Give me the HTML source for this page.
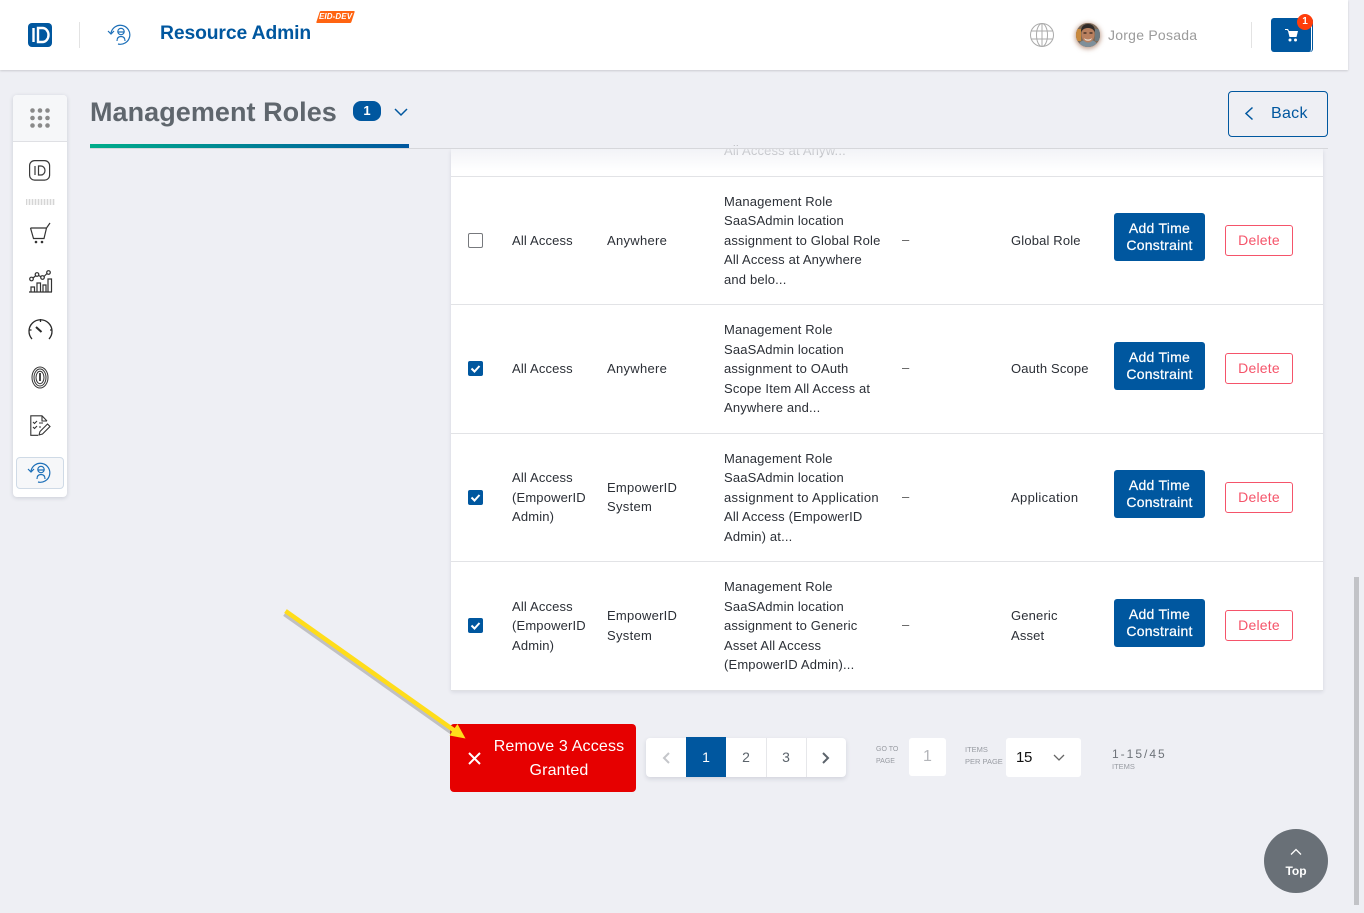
<!DOCTYPE html>
<html><head><meta charset="utf-8"><style>
html,body{margin:0;padding:0;width:1364px;height:913px;overflow:hidden;background:#eeeff4;font-family:"Liberation Sans",sans-serif}
.a{position:absolute}
.t{position:absolute;white-space:nowrap;line-height:20px;font-size:13px;color:#2b2f36;letter-spacing:.16px}
.btn{position:absolute;left:1114px;width:91px;height:48px;background:#00579f;border-radius:3px;color:#fff;font-size:14px;line-height:17px;text-align:center;letter-spacing:.25px;display:flex;align-items:center;justify-content:center;-webkit-text-stroke:.25px #fff}
.del{position:absolute;left:1225px;width:66px;height:29px;border:1px solid #f5546a;border-radius:3px;color:#f5546a;font-size:14px;line-height:29px;text-align:center;background:#fff;letter-spacing:.2px}
.cb{position:absolute;left:468px;width:15px;height:15px;border-radius:2px;background:#00579f}
.sep{position:absolute;left:451px;width:872px;height:1px;background:#e2e3e6}
svg{position:absolute;overflow:visible}
</style></head><body>

<!-- header -->
<div class="a" style="left:0;top:0;width:1348px;height:70px;background:#fff;box-shadow:0 1px 2px rgba(0,0,0,.15)"></div>
<div class="a" style="left:28px;top:23px;width:24px;height:24px;border-radius:4px;background:#00579f"></div>
<svg style="left:28px;top:23px" width="24" height="24" fill="none" stroke="#fff" stroke-width="2.4"><path d="M5.500 5v14"/><path d="M10 5h4.500a6 7 0 0 1 0 14H10z"/></svg>
<div class="a" style="left:79px;top:22px;width:1px;height:26px;background:#e3e3e3"></div>
<svg style="left:108px;top:24px" width="24" height="22" fill="none" stroke="#1c6fb8" stroke-width="1.2"><path d="M3 9a9.500 9.500 0 1 1 7 11"/><path d="M0 7l3 3 3-3"/><circle cx="13" cy="7.500" r="3.200"/><path d="M9.500 8h7M9 17c0-3 1.500-4.500 4-4.500s4 1.500 4 4.500"/></svg>
<div class="t" style="left:160px;top:22px;font-size:19.300px;line-height:24px;font-weight:bold;color:#00579f;letter-spacing:-.1px">Resource Admin</div>
<div class="a" style="left:318px;top:11px;width:35px;height:12px;background:#ff6411;transform:skewX(-18deg);border-radius:1px"></div>
<div class="t" style="left:319px;top:11px;font-size:8px;line-height:12px;font-weight:bold;font-style:italic;color:#fff;letter-spacing:.1px">EID-DEV</div>

<svg style="left:1030px;top:23px" width="24" height="24" fill="none" stroke="#ababab" stroke-width="1"><circle cx="12" cy="12" r="11.500"/><ellipse cx="12" cy="12" rx="5.500" ry="11.500"/><path d="M12 .5v23M1.500 8h21M1.500 16h21"/></svg>
<div class="a" style="left:1076px;top:23px;width:24px;height:24px;border-radius:50%;background:#8a7565;box-shadow:0 1px 5px 1px rgba(140,80,50,.55)"></div>
<svg style="left:1076px;top:23px" width="24" height="24"><defs><clipPath id="av"><circle cx="12" cy="12" r="12"/></clipPath></defs><g clip-path="url(#av)"><rect width="24" height="24" fill="#7d6a58"/><rect x="0" y="6" width="5" height="12" fill="#c98a3e"/><rect x="19" y="6" width="5" height="12" fill="#6d7a80"/><path d="M2 24c1-6 5-7 10-7s9 1 10 7z" fill="#7e8f9a"/><ellipse cx="12" cy="11.500" rx="6.500" ry="8" fill="#b9805f"/><path d="M5 9c0-6 3-8 7-8s7 2 7 8c-2-3-4-4-7-4s-5 1-7 4z" fill="#2f2a28"/><path d="M8 15c2 2 6 2 8 0l-1 2c-2 1-4 1-6 0z" fill="#eadfd4"/><path d="M7.500 10h3M13.500 10h3" stroke="#33231c" stroke-width="1.200"/></g></svg>
<div class="t" style="left:1108px;top:25px;font-size:14px;color:#9b9b9b;letter-spacing:.24px">Jorge Posada</div>
<div class="a" style="left:1251px;top:22px;width:1px;height:26px;background:#e3e3e3"></div>
<div class="a" style="left:1271px;top:18px;width:40px;height:34px;background:#00579f;border-radius:3px;border-right:1px solid #fff;box-shadow:1px 0 0 #00579f"></div>
<svg style="left:1285px;top:28px" width="14" height="14" fill="#fff"><path d="M0 1h3l1 2h9l-1.500 6H4.500L3 3 2 2H0z"/><circle cx="5" cy="12" r="1.500"/><circle cx="10.500" cy="12" r="1.500"/></svg>
<div class="a" style="left:1297px;top:14px;width:16px;height:16px;border-radius:50%;background:#ff3d0a;color:#fff;font-size:10px;font-weight:bold;line-height:16px;text-align:center">1</div>

<!-- scrollbar -->
<div class="a" style="left:1354px;top:577px;width:5px;height:328px;background:#c2c3c7"></div>

<!-- title -->
<div class="t" style="left:90px;top:95px;font-size:27px;line-height:34px;font-weight:bold;color:#5f666d;letter-spacing:.05px">Management Roles</div>
<div class="a" style="left:353px;top:101px;width:28px;height:20px;border-radius:8px;background:#00579f;color:#fff;font-size:13px;font-weight:bold;line-height:20px;text-align:center">1</div>
<svg style="left:394px;top:108px" width="14" height="9" fill="none" stroke="#00579f" stroke-width="1.500"><path d="M1 1l6 6 6-6"/></svg>

<div class="a" style="left:1228px;top:91px;width:98px;height:44px;border:1px solid #00579f;border-radius:4px"></div>
<svg style="left:1244px;top:106px" width="10" height="15" fill="none" stroke="#00579f" stroke-width="1.500"><path d="M8.500 1.500L2 7.500l6.500 6"/></svg>
<div class="t" style="left:1271px;top:104px;font-size:16px;color:#00579f;letter-spacing:.3px">Back</div>

<!-- sidebar -->
<div class="a" style="left:13px;top:95px;width:54px;height:402px;background:#fff;border-radius:4px;box-shadow:0 1px 4px rgba(40,50,80,.18)"></div>
<div class="a" style="left:13px;top:95px;width:54px;height:46px;background:#f6f7f9;border-bottom:1px solid #dfe0e4;border-radius:4px 4px 0 0"></div>
<svg style="left:30px;top:108px" width="20" height="20" fill="#8a8a8a"><circle cx="2.500" cy="2.500" r="2.300"/><circle cx="10" cy="2.500" r="2.300"/><circle cx="17.500" cy="2.500" r="2.300"/><circle cx="2.500" cy="10" r="2.300"/><circle cx="10" cy="10" r="2.300"/><circle cx="17.500" cy="10" r="2.300"/><circle cx="2.500" cy="17.500" r="2.300"/><circle cx="10" cy="17.500" r="2.300"/><circle cx="17.500" cy="17.500" r="2.300"/></svg>
<svg style="left:29px;top:160px" width="22" height="21" fill="none" stroke="#3a3a3a" stroke-width="1.200"><rect x=".6" y=".6" width="20" height="19.500" rx="5"/><path d="M6 6v9M9.500 6H12a4 4.500 0 0 1 0 9H9.500z"/></svg>
<div class="a" style="left:26px;top:199px;width:29px;height:6px;background:repeating-linear-gradient(90deg,#d5d5d5 0 1px,#f2f2f2 1px 3px)"></div>
<svg style="left:30px;top:223px" width="22" height="22" fill="none" stroke="#333" stroke-width="1.200"><path d="M.5 5h15.500M.5 5l3 10.500h10.500L16.500 5 20 0"/><circle cx="6" cy="19" r=".7" fill="#333"/><circle cx="12" cy="19" r=".7" fill="#333"/></svg>
<svg style="left:28px;top:270px" width="24" height="23" fill="none" stroke="#333" stroke-width="1.200"><path d="M1 22h23"/><path d="M3 22v-5h3.500v5M9 22v-9h3.500v9M15 22v-7h3v7M20 22V9h3.500v13"/><circle cx="3.500" cy="9" r="1.800"/><circle cx="9" cy="4.500" r="1.800"/><circle cx="14.500" cy="7.500" r="1.800"/><circle cx="20.500" cy="2.500" r="1.800"/><path d="M5 8l3-2.500M10.500 5.500l2.500 1.200M16 6.500l3-3"/></svg>
<svg style="left:28px;top:318px" width="25" height="24" fill="none" stroke="#2a2a2a" stroke-width="1.300"><path d="M4 21a11.500 11.500 0 1 1 17 0"/><path d="M12.500 1v3M1 12h2.500M22 12h2"/><path d="M8 9l5.500 5" stroke-width="2"/></svg>
<svg style="left:31px;top:366px" width="18" height="23" fill="none" stroke="#333" stroke-width="1"><ellipse cx="9" cy="11.500" rx="8" ry="10.500"/><ellipse cx="9" cy="11.500" rx="6" ry="8.500"/><ellipse cx="9" cy="11.500" rx="4" ry="6.200"/><path d="M9 7v8" stroke-width="1.800"/></svg>
<svg style="left:30px;top:415px" width="21" height="21" fill="none" stroke="#333" stroke-width="1.100"><path d="M17 6L12 .8H.8v19.500H8M12 .8V6h5"/><path d="M3 7l1.500 1.500L7 6M3 12l1.500 1.500L7 11M9 8h4M9 12h2"/><path d="M9 20l1-3.500 7.500-7.500 2.500 2.500-7.500 7.500z"/></svg>
<div class="a" style="left:16px;top:457px;width:46px;height:30px;background:#f6f7f9;border:1px solid #cfdae6;border-radius:4px"></div>
<svg style="left:28px;top:462px" width="24" height="22" fill="none" stroke="#1c6fb8" stroke-width="1.200"><path d="M3 9a9.500 9.500 0 1 1 7 11"/><path d="M0 7l3 3 3-3"/><circle cx="13" cy="7.500" r="3.200"/><path d="M9.500 8h7M9 17c0-3 1.500-4.500 4-4.500s4 1.500 4 4.500"/></svg>

<!-- table -->
<div class="a" style="left:451px;top:149px;width:872px;height:541px;background:#fff;box-shadow:0 2px 4px rgba(40,50,80,.12)"></div>
<div class="t" style="left:724px;top:141px;color:#8f9195">All Access at Anyw...</div>
<div class="a" style="left:451px;top:146px;width:872px;height:3px;background:#eeeff4"></div>
<div class="a" style="left:451px;top:149px;width:872px;height:22px;background:linear-gradient(rgba(238,239,244,.75),rgba(255,255,255,0))"></div>
<div class="a" style="left:90px;top:148px;width:1238px;height:1px;background:#d6d7db"></div>
<div class="a" style="left:90px;top:144px;width:319px;height:4px;background:linear-gradient(90deg,#00ad8a,#00579f)"></div>
<div class="sep" style="top:176px"></div><div class="sep" style="top:304px"></div><div class="sep" style="top:433px"></div><div class="sep" style="top:561px"></div>
<div class="a" style="left:451px;top:690px;width:872px;height:1px;background:#dfe0e4"></div>

<!-- row 1 -->
<div class="a" style="left:468px;top:233px;width:13px;height:13px;border:1px solid #77797d;border-radius:2px;background:#fff"></div>
<div class="t" style="left:512px;top:231px">All Access</div>
<div class="t" style="left:607px;top:231px;letter-spacing:.3px">Anywhere</div>
<div class="t" style="left:724px;top:192px">Management Role</div>
<div class="t" style="left:724px;top:211px">SaaSAdmin location</div>
<div class="t" style="left:724px;top:231px">assignment to Global Role</div>
<div class="t" style="left:724px;top:250px">All Access at Anywhere</div>
<div class="t" style="left:724px;top:270px">and belo...</div>
<div class="t" style="left:902px;top:230px;color:#555">–</div>
<div class="t" style="left:1011px;top:231px">Global Role</div>
<div class="btn" style="top:213px">Add Time<br>Constraint</div>
<div class="del" style="top:225px">Delete</div>

<!-- row 2 -->
<div class="cb" style="top:361px"></div>
<svg style="left:468px;top:361px" width="15" height="15" fill="none" stroke="#fff" stroke-width="2"><path d="M3.500 7.500l3 3 5-5.500"/></svg>
<div class="t" style="left:512px;top:359px">All Access</div>
<div class="t" style="left:607px;top:359px;letter-spacing:.3px">Anywhere</div>
<div class="t" style="left:724px;top:320px">Management Role</div>
<div class="t" style="left:724px;top:340px">SaaSAdmin location</div>
<div class="t" style="left:724px;top:359px">assignment to OAuth</div>
<div class="t" style="left:724px;top:379px">Scope Item All Access at</div>
<div class="t" style="left:724px;top:398px">Anywhere and...</div>
<div class="t" style="left:902px;top:358px;color:#555">–</div>
<div class="t" style="left:1011px;top:359px">Oauth Scope</div>
<div class="btn" style="top:342px">Add Time<br>Constraint</div>
<div class="del" style="top:353px">Delete</div>

<!-- row 3 -->
<div class="cb" style="top:490px"></div>
<svg style="left:468px;top:490px" width="15" height="15" fill="none" stroke="#fff" stroke-width="2"><path d="M3.500 7.500l3 3 5-5.500"/></svg>
<div class="t" style="left:512px;top:468px">All Access</div>
<div class="t" style="left:512px;top:488px">(EmpowerID</div>
<div class="t" style="left:512px;top:507px">Admin)</div>
<div class="t" style="left:607px;top:478px;letter-spacing:.25px">EmpowerID</div>
<div class="t" style="left:607px;top:497px;letter-spacing:.3px">System</div>
<div class="t" style="left:724px;top:449px">Management Role</div>
<div class="t" style="left:724px;top:468px">SaaSAdmin location</div>
<div class="t" style="left:724px;top:488px;letter-spacing:.3px">assignment to Application</div>
<div class="t" style="left:724px;top:507px">All Access (EmpowerID</div>
<div class="t" style="left:724px;top:527px">Admin) at...</div>
<div class="t" style="left:902px;top:487px;color:#555">–</div>
<div class="t" style="left:1011px;top:488px;letter-spacing:.35px">Application</div>
<div class="btn" style="top:470px">Add Time<br>Constraint</div>
<div class="del" style="top:482px">Delete</div>

<!-- row 4 -->
<div class="cb" style="top:618px"></div>
<svg style="left:468px;top:618px" width="15" height="15" fill="none" stroke="#fff" stroke-width="2"><path d="M3.500 7.500l3 3 5-5.500"/></svg>
<div class="t" style="left:512px;top:597px">All Access</div>
<div class="t" style="left:512px;top:616px">(EmpowerID</div>
<div class="t" style="left:512px;top:636px">Admin)</div>
<div class="t" style="left:607px;top:606px;letter-spacing:.25px">EmpowerID</div>
<div class="t" style="left:607px;top:626px;letter-spacing:.3px">System</div>
<div class="t" style="left:724px;top:577px">Management Role</div>
<div class="t" style="left:724px;top:597px">SaaSAdmin location</div>
<div class="t" style="left:724px;top:616px">assignment to Generic</div>
<div class="t" style="left:724px;top:636px">Asset All Access</div>
<div class="t" style="left:724px;top:655px">(EmpowerID Admin)...</div>
<div class="t" style="left:902px;top:615px;color:#555">–</div>
<div class="t" style="left:1011px;top:606px">Generic</div>
<div class="t" style="left:1011px;top:626px">Asset</div>
<div class="btn" style="top:599px">Add Time<br>Constraint</div>
<div class="del" style="top:610px">Delete</div>

<!-- remove button -->
<div class="a" style="left:450px;top:724px;width:186px;height:68px;background:#e60000;border-radius:4px"></div>
<svg style="left:468px;top:752px" width="13" height="13" fill="none" stroke="#fff" stroke-width="2"><path d="M1 1l11 11M12 1L1 12"/></svg>
<div class="t" style="left:482px;top:735px;width:154px;text-align:center;font-size:16px;line-height:24px;color:#fff;letter-spacing:.17px">Remove 3 Access<br>Granted</div>

<!-- arrow -->
<svg style="left:280px;top:605px" width="190" height="140"><path d="M5.500 6L175 126" stroke="#7a7a7a" stroke-opacity=".4" stroke-width="4.500" fill="none" transform="translate(-1 3)"/><path d="M5.500 6L175 126" stroke="#ffdd1a" stroke-width="4.500" fill="none"/><path d="M185.500 133.500l-16-3 8-11.500z" fill="#ffdd1a"/></svg>

<!-- pagination -->
<div class="a" style="left:646px;top:738px;width:200px;height:39px;background:#fff;border-radius:4px;box-shadow:0 2px 5px rgba(40,50,80,.14)"></div>
<div class="a" style="left:686px;top:737px;width:40px;height:40px;background:#00579f"></div>
<div class="a" style="left:766px;top:738px;width:1px;height:39px;background:#e6e7ea"></div>
<div class="a" style="left:806px;top:738px;width:1px;height:39px;background:#e6e7ea"></div>
<svg style="left:662px;top:752px" width="8" height="12" fill="none" stroke="#c4c6ca" stroke-width="2"><path d="M7 1L2 6l5 5"/></svg>
<div class="t" style="left:686px;top:747px;width:40px;text-align:center;font-size:14px;color:#fff;letter-spacing:0">1</div>
<div class="t" style="left:726px;top:747px;width:40px;text-align:center;font-size:14px;color:#5b636b;letter-spacing:0">2</div>
<div class="t" style="left:766px;top:747px;width:40px;text-align:center;font-size:14px;color:#5b636b;letter-spacing:0">3</div>
<svg style="left:822px;top:752px" width="8" height="12" fill="none" stroke="#5b636b" stroke-width="2"><path d="M1 1l5 5-5 5"/></svg>

<div class="t" style="left:876px;top:744px;font-size:7px;line-height:12px;color:#989ba2;letter-spacing:0">GO TO<br>PAGE</div>
<div class="a" style="left:909px;top:738px;width:37px;height:38px;background:#fff;border-radius:3px"></div>
<div class="t" style="left:909px;top:747px;width:37px;text-align:center;font-size:16px;color:#b4b6ba;letter-spacing:0">1</div>
<div class="t" style="left:965px;top:744px;font-size:7.500px;line-height:12px;color:#989ba2;letter-spacing:0">ITEMS<br>PER PAGE</div>
<div class="a" style="left:1006px;top:738px;width:75px;height:39px;background:#fff;border-radius:3px"></div>
<div class="t" style="left:1016px;top:748px;font-size:15px;color:#111;letter-spacing:-.3px">15</div>
<svg style="left:1053px;top:754px" width="12" height="8" fill="none" stroke="#666" stroke-width="1.300"><path d="M1 1l5 5 5-5"/></svg>
<div class="t" style="left:1112px;top:744px;font-size:12px;color:#6e7379;letter-spacing:2px">1-15/45</div>
<div class="t" style="left:1112px;top:762px;font-size:7.500px;line-height:10px;color:#989ba2;letter-spacing:0">ITEMS</div>

<!-- top -->
<div class="a" style="left:1264px;top:829px;width:64px;height:64px;border-radius:50%;background:#697077"></div>
<svg style="left:1290px;top:848px" width="12" height="8" fill="none" stroke="#fff" stroke-width="1.300"><path d="M1 6.500l5-5 5 5"/></svg>
<div class="t" style="left:1264px;top:861px;width:64px;text-align:center;font-size:12px;font-weight:bold;color:#fff;letter-spacing:0">Top</div>
</body></html>
